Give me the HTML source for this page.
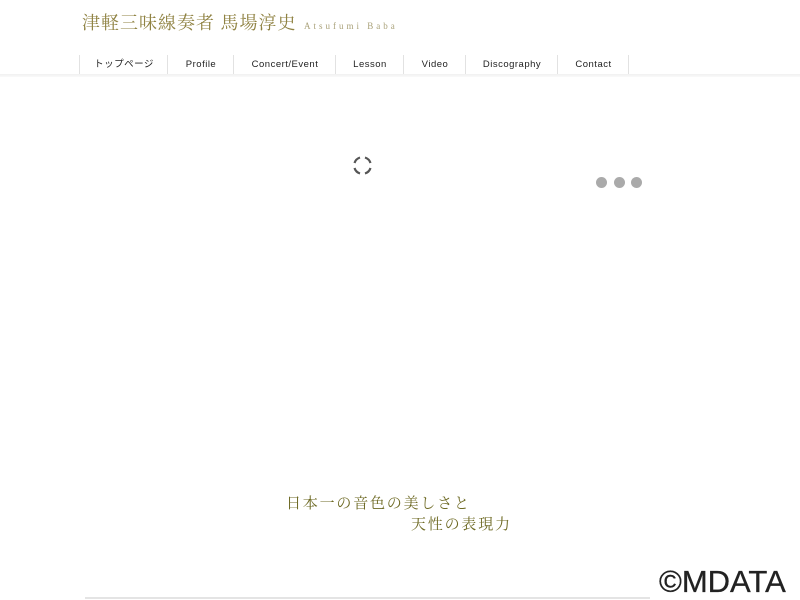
<!DOCTYPE html>
<html><head><meta charset="utf-8"><style>
body{margin:0;width:800px;height:600px;background:#fff;position:relative;overflow:hidden;font-family:"Liberation Sans","Noto Sans CJK JP",sans-serif}
.t{position:absolute;left:82px;top:9px;font-family:"Liberation Serif","Noto Serif CJK SC",serif;font-size:18px;color:#8f8242;letter-spacing:1px;white-space:nowrap}
.t span{font-size:9px;letter-spacing:3px;color:#aaa27a;margin-left:2px}
.nav{position:absolute;top:55px;left:0;width:800px;height:19px}
.nav div{position:absolute;top:0;height:19px;border-left:1px solid #e2e2e2;font-size:9.5px;color:#222;line-height:19px;text-align:center;letter-spacing:.5px}
.hl{position:absolute;top:74px;left:0;width:800px;height:3px;background:linear-gradient(#f0f0f0,#fafafa)}
.d{position:absolute;top:177px;width:11px;height:11px;border-radius:50%;background:#aaa}
.s{position:absolute;left:286px;font-family:"Liberation Serif","Noto Serif CJK JP",serif;font-size:15px;color:#6e6a24;letter-spacing:1.8px;white-space:nowrap}
</style></head><body>
<div class="t">津軽三味線奏者 馬場淳史 <span>Atsufumi Baba</span></div>
<div class="nav">
<div style="left:79px;width:88px">トップページ</div>
<div style="left:167px;width:66px">Profile</div>
<div style="left:233px;width:102px">Concert/Event</div>
<div style="left:335px;width:68px">Lesson</div>
<div style="left:403px;width:62px">Video</div>
<div style="left:465px;width:92px">Discography</div>
<div style="left:557px;width:71px">Contact</div>
<div style="left:628px;width:1px"></div>
</div>
<div class="hl"></div>
<svg style="position:absolute;left:352px;top:155px" width="21" height="21" viewBox="0 0 21 21" fill="none" stroke="#555" stroke-width="2.2">
<path d="M2.5 8 A8.5 8.5 0 0 1 8 2.5"/><path d="M13 2.5 A8.5 8.5 0 0 1 18.5 8"/><path d="M18.5 13 A8.5 8.5 0 0 1 13 18.5"/><path d="M8 18.5 A8.5 8.5 0 0 1 2.5 13"/></svg>
<div class="d" style="left:596px"></div><div class="d" style="left:614px"></div><div class="d" style="left:631px"></div>
<div class="s" style="top:492px">日本一の音色の美しさと</div>
<div class="s" style="top:513px;left:411px">天性の表現力</div>
<div style="position:absolute;left:85px;top:597px;width:565px;height:2px;background:#e4e4e4"></div>
<div style="position:absolute;left:659px;top:564px;font-size:31px;color:#222;white-space:nowrap;-webkit-text-stroke:0.3px #222">©MDATA</div>
</body></html>
